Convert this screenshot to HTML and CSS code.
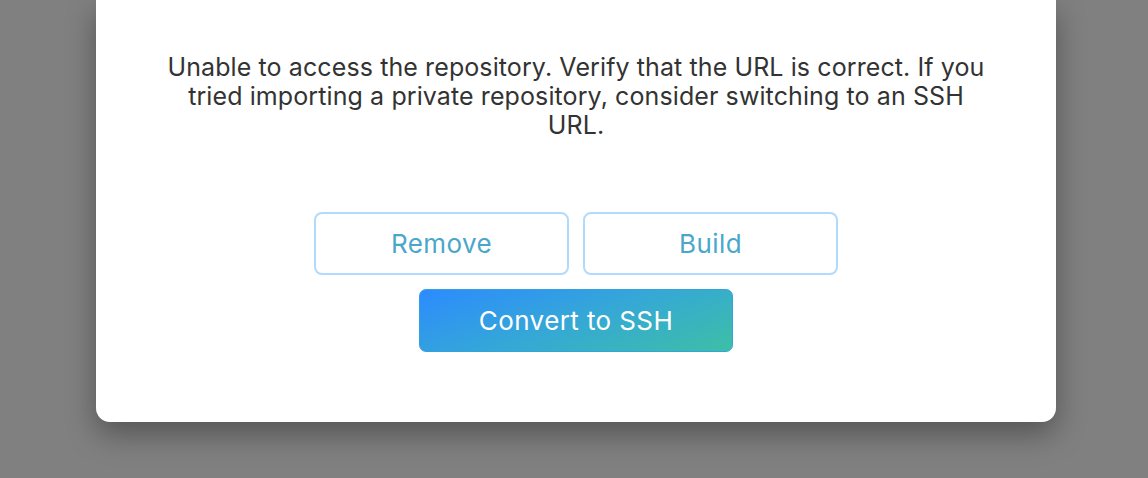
FILE: index.html
```html
<!DOCTYPE html>
<html>
<head>
<meta charset="utf-8">
<link rel="stylesheet" href="styles.css">
</head>
<body>
<div class="backdrop">
  <div class="modal">
    <p class="message">Unable to access the repository. Verify that the URL is correct. If you tried importing a private repository, consider switching to an SSH URL.</p>
    <div class="actions">
      <div class="row">
        <button class="btn btn-outline">Remove</button>
        <button class="btn btn-outline">Build</button>
      </div>
      <button class="btn btn-primary">Convert to SSH</button>
    </div>
  </div>
</div>
</body>
</html>
```
FILE: styles.css
```css
html, body {
  margin: 0;
  padding: 0;
}
body {
  background: #808080;
  width: 1148px;
  height: 478px;
  overflow: hidden;
  font-family: "Inter", "Noto Sans", sans-serif;
}
.backdrop {
  display: flex;
  padding-left: 96px;
}
.modal {
  width: 960px;
  height: 422px;
  box-sizing: border-box;
  background: #ffffff;
  border-radius: 0 0 14px 14px;
  box-shadow: 0 12px 30px rgba(0, 0, 0, 0.35);
  display: flex;
  flex-direction: column;
  align-items: center;
  padding-top: 53px;
}
.message {
  margin: 0;
  width: 830px;
  text-align: center;
  font-size: 25px;
  letter-spacing: 0.1px;
  line-height: 29px;
  color: #333333;
}
.actions {
  margin-top: 72px;
  display: flex;
  flex-direction: column;
  align-items: center;
  gap: 14px;
}
.row {
  display: flex;
  gap: 14px;
}
.btn {
  font-family: inherit;
  font-size: 26px;
  letter-spacing: 0.4px;
  height: 63px;
  padding: 0;
  box-sizing: border-box;
  cursor: pointer;
}
.btn-outline {
  width: 255px;
  background: #ffffff;
  border: 2px solid #b0daff;
  border-radius: 8px;
  color: #4aa7cb;
}
.btn-primary {
  width: 314px;
  border: 1px solid #35a2e0;
  border-radius: 7px;
  color: #ffffff;
  background: linear-gradient(160deg, #2c8bff 0%, #35a8d6 50%, #3dbfa6 100%);
}
```
